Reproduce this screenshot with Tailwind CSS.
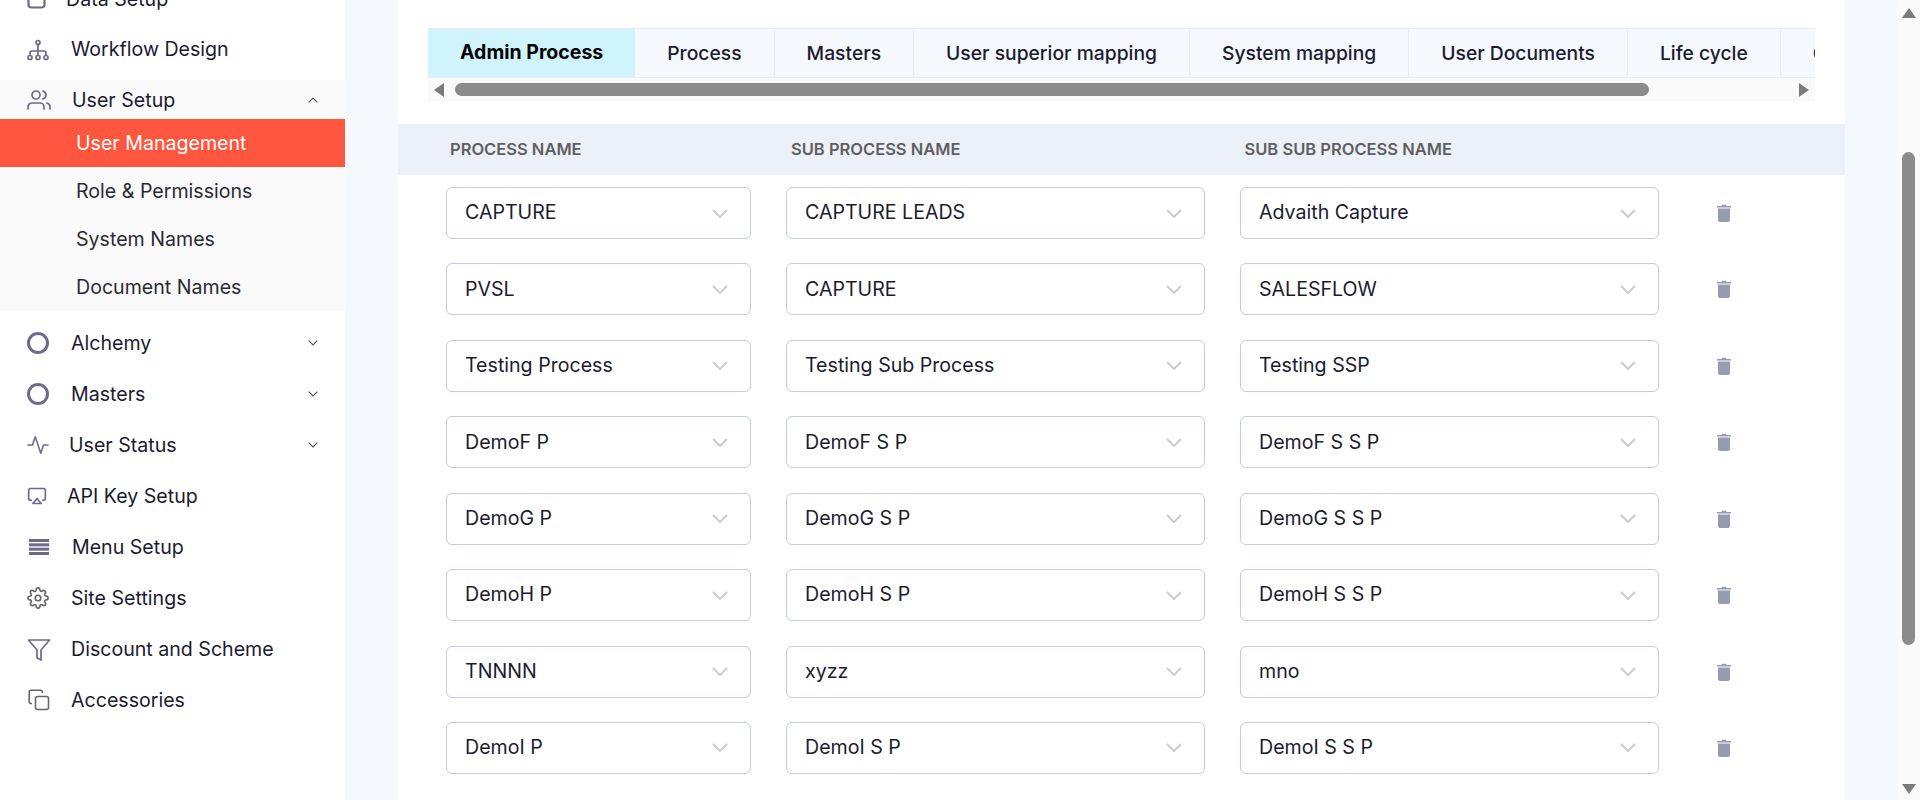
<!DOCTYPE html>
<html lang="en">
<head>
  <meta charset="UTF-8" />
  <title>User Management</title>
  <script src="https://cdn.jsdelivr.net/npm/@tailwindcss/browser@4"></script>
</head>
<body class="h-[800px] overflow-hidden flex bg-[#f5f8fd] font-['Inter',sans-serif] text-[#1b1b2f]">

  <!-- Sidebar -->
  <aside class="w-[345px] h-[800px] shrink-0 overflow-hidden bg-white text-[19.6px]">
    <div class="-mt-[27px] h-[51px] pl-[27px] flex items-center">
      <svg class="w-[20px] h-[20px] text-[#6e6a8c]" viewBox="0 0 20 20" fill="none" stroke="currentColor" stroke-width="2.2"><rect x="1.5" y="1.5" width="16" height="17" rx="3"/></svg>
      <span class="ml-[19px] mt-[2px]">Data Setup</span>
    </div>
    <div class="h-[51px] pl-[27px] flex items-center">
      <svg class="w-[22px] h-[22px] text-[#6e6a8c]" viewBox="0 0 22 22" fill="none" stroke="currentColor" stroke-width="1.7"><circle cx="11" cy="3.5" r="2"/><circle cx="3" cy="18.5" r="2"/><circle cx="11" cy="18.5" r="2"/><circle cx="19" cy="18.5" r="2"/><path d="M11 5.5v11M3 16.5v-2.5a2 2 0 0 1 2-2h12a2 2 0 0 1 2 2v2.5"/></svg>
      <span class="ml-[22px]">Workflow Design</span>
    </div>

    <div class="mt-[5px] bg-[#fafafa]">
      <div class="h-[39px] pl-[27px] pr-[27px] flex items-center">
        <svg class="w-[24px] h-[24px] text-[#6e6a8c]" viewBox="0 0 24 24" fill="none" stroke="currentColor" stroke-width="1.7" stroke-linecap="round" stroke-linejoin="round"><path d="M17 21v-2a4 4 0 0 0-4-4H5a4 4 0 0 0-4 4v2"/><circle cx="9" cy="7" r="4"/><path d="M23 21v-2a4 4 0 0 0-3-3.87"/><path d="M16 3.13a4 4 0 0 1 0 7.75"/></svg>
        <span class="ml-[21px] mt-[2px]">User Setup</span>
        <svg class="ml-auto w-[10px] h-[6px] text-[#555]" viewBox="0 0 10 6" fill="none" stroke="currentColor" stroke-width="1.2"><path d="M.7 5.3 5 1l4.3 4.3"/></svg>
      </div>
      <div class="h-[48px] pl-[76px] pt-[2px] flex items-center bg-[#ff5640] text-white">User Management</div>
      <div class="h-[48px] pl-[76px] pt-[2px] flex items-center text-[#2a2a35]">Role &amp; Permissions</div>
      <div class="h-[48px] pl-[76px] pt-[2px] flex items-center text-[#2a2a35]">System Names</div>
      <div class="h-[48px] pl-[76px] pt-[2px] flex items-center text-[#2a2a35]">Document Names</div>
    </div>

    <div class="mt-[6.5px] h-[51px] pl-[27px] pr-[27px] flex items-center">
      <svg class="w-[22px] h-[22px] text-[#6e6a8c]" viewBox="0 0 22 22" fill="none" stroke="currentColor" stroke-width="3"><circle cx="11" cy="11" r="9.5"/></svg>
      <span class="ml-[22px] mt-[2px]">Alchemy</span>
      <svg class="ml-auto w-[10px] h-[6px] text-[#555]" viewBox="0 0 10 6" fill="none" stroke="currentColor" stroke-width="1.2"><path d="M.7.7 5 5l4.3-4.3"/></svg>
    </div>
    <div class="h-[51px] pl-[27px] pr-[27px] flex items-center">
      <svg class="w-[22px] h-[22px] text-[#6e6a8c]" viewBox="0 0 22 22" fill="none" stroke="currentColor" stroke-width="3"><circle cx="11" cy="11" r="9.5"/></svg>
      <span class="ml-[22px] mt-[2px]">Masters</span>
      <svg class="ml-auto w-[10px] h-[6px] text-[#555]" viewBox="0 0 10 6" fill="none" stroke="currentColor" stroke-width="1.2"><path d="M.7.7 5 5l4.3-4.3"/></svg>
    </div>
    <div class="h-[51px] pl-[27px] pr-[27px] flex items-center">
      <svg class="w-[22px] h-[22px] text-[#6e6a8c]" viewBox="0 0 24 24" fill="none" stroke="currentColor" stroke-width="1.7" stroke-linecap="round" stroke-linejoin="round"><polyline points="23 12 18 12 15 21 9 3 6 12 1 12"/></svg>
      <span class="ml-[20px] mt-[2px]">User Status</span>
      <svg class="ml-auto w-[10px] h-[6px] text-[#555]" viewBox="0 0 10 6" fill="none" stroke="currentColor" stroke-width="1.2"><path d="M.7.7 5 5l4.3-4.3"/></svg>
    </div>
    <div class="h-[51px] pl-[27px] flex items-center">
      <svg class="w-[20px] h-[20px] text-[#6e6a8c]" viewBox="0 0 24 24" fill="none" stroke="currentColor" stroke-width="2" stroke-linecap="round" stroke-linejoin="round"><path d="M5 17H4a2 2 0 0 1-2-2V5a2 2 0 0 1 2-2h16a2 2 0 0 1 2 2v10a2 2 0 0 1-2 2h-1"/><polygon points="12 15 17 21 7 21 12 15"/></svg>
      <span class="ml-[20px] mt-[2px]">API Key Setup</span>
    </div>
    <div class="h-[51px] pl-[29px] flex items-center">
      <svg class="w-[20px] h-[16px] text-[#6e6a8c]" viewBox="0 0 20 16" fill="currentColor"><rect width="20" height="3"/><rect y="4.3" width="20" height="3"/><rect y="8.7" width="20" height="3"/><rect y="13" width="20" height="3"/></svg>
      <span class="ml-[23px] mt-[2px]">Menu Setup</span>
    </div>
    <div class="h-[51px] pl-[27px] flex items-center">
      <svg class="w-[22px] h-[22px] text-[#666]" viewBox="0 0 24 24" fill="none" stroke="currentColor" stroke-width="1.8" stroke-linecap="round" stroke-linejoin="round"><circle cx="12" cy="12" r="3"/><path d="M19.4 15a1.65 1.65 0 0 0 .33 1.82l.06.06a2 2 0 0 1 0 2.83 2 2 0 0 1-2.83 0l-.06-.06a1.65 1.65 0 0 0-1.82-.33 1.65 1.65 0 0 0-1 1.51V21a2 2 0 0 1-2 2 2 2 0 0 1-2-2v-.09A1.65 1.65 0 0 0 9 19.4a1.65 1.65 0 0 0-1.82.33l-.06.06a2 2 0 0 1-2.83 0 2 2 0 0 1 0-2.83l.06-.06a1.65 1.65 0 0 0 .33-1.82 1.65 1.65 0 0 0-1.51-1H3a2 2 0 0 1-2-2 2 2 0 0 1 2-2h.09A1.65 1.65 0 0 0 4.6 9a1.65 1.65 0 0 0-.33-1.82l-.06-.06a2 2 0 0 1 0-2.83 2 2 0 0 1 2.83 0l.06.06a1.65 1.65 0 0 0 1.82.33H9a1.65 1.65 0 0 0 1-1.51V3a2 2 0 0 1 2-2 2 2 0 0 1 2 2v.09a1.65 1.65 0 0 0 1 1.51 1.65 1.65 0 0 0 1.82-.33l.06-.06a2 2 0 0 1 2.83 0 2 2 0 0 1 0 2.83l-.06.06a1.65 1.65 0 0 0-.33 1.82V9a1.65 1.65 0 0 0 1.51 1H21a2 2 0 0 1 2 2 2 2 0 0 1-2 2h-.09a1.65 1.65 0 0 0-1.51 1z"/></svg>
      <span class="ml-[22px] mt-[2px]">Site Settings</span>
    </div>
    <div class="h-[51px] pl-[27px] flex items-center">
      <svg class="w-[24px] h-[24px] text-[#6e6a8c]" viewBox="0 0 24 24" fill="none" stroke="currentColor" stroke-width="1.7" stroke-linejoin="round"><polygon points="22.5 3 1.5 3 10 13 10 21 14 23 14 13"/></svg>
      <span class="ml-[20px] mt-[2px]">Discount and Scheme</span>
    </div>
    <div class="h-[51px] pl-[28px] flex items-center">
      <svg class="w-[22px] h-[22px] text-[#666]" viewBox="0 0 22 22" fill="none" stroke="currentColor" stroke-width="1.6"><rect x="7.5" y="7.5" width="13" height="13" rx="2"/><path d="M4 14.5H3a1.8 1.8 0 0 1-1.8-1.8V3A1.8 1.8 0 0 1 3 1.2h9.5A1.8 1.8 0 0 1 14.3 3v1"/></svg>
      <span class="ml-[21px] mt-[2px]">Accessories</span>
    </div>
  </aside>

  <!-- Main area -->
  <main class="flex-1 min-w-0 pl-[53px] pr-[52px]">
    <div class="bg-white h-[800px]">
      <div class="pt-[28px] pl-[30px] pr-[30px]">
        <!-- Tabs -->
        <div class="flex h-[50px] overflow-hidden border-y border-[#e8ecf4] bg-[#f5f8fd] text-[19.3px] whitespace-nowrap">
          <div class="px-[32px] flex items-center bg-[#cff4fc] font-bold text-black text-[19.5px]">Admin Process</div>
          <div class="px-[32px] flex items-center border-r border-[#e8ecf4] font-medium">Process</div>
          <div class="px-[32px] flex items-center border-r border-[#e8ecf4] font-medium">Masters</div>
          <div class="px-[32px] flex items-center border-r border-[#e8ecf4] font-medium">User superior mapping</div>
          <div class="px-[32px] flex items-center border-r border-[#e8ecf4] font-medium">System mapping</div>
          <div class="px-[32px] flex items-center border-r border-[#e8ecf4] font-medium">User Documents</div>
          <div class="px-[32px] flex items-center border-r border-[#e8ecf4] font-medium">Life cycle</div>
          <div class="px-[32px] flex items-center font-medium">Company</div>
        </div>
        <!-- Tabs horizontal scrollbar -->
        <div class="h-[23px] bg-[#fafafa] flex items-center pl-[6px] pr-[6px]">
          <svg class="w-[10px] h-[14px] text-[#7a7a7a]" viewBox="0 0 10 14" fill="currentColor"><path d="M10 0v14L0 7z"/></svg>
          <div class="ml-[11px] w-[1194px] h-[13px] rounded-full bg-[#8c8c8c]"></div>
          <svg class="ml-auto w-[10px] h-[14px] text-[#7a7a7a]" viewBox="0 0 10 14" fill="currentColor"><path d="M0 0v14l10-7z"/></svg>
        </div>
      </div>

      <!-- Table header -->
      <div class="mt-[23px] h-[51px] bg-[#ecf1f9] flex items-center text-[16.5px] font-semibold text-[#5f5f5f]">
        <div class="ml-[52px] w-[341px]">PROCESS NAME</div>
        <div class="w-[453.5px]">SUB PROCESS NAME</div>
        <div>SUB SUB PROCESS NAME</div>
      </div>

      <!-- Rows -->
      <div id="rows" class="pt-[12px]"></div>
    </div>
  </main>

  <!-- Page scrollbar -->
  <div class="w-[23px] h-[800px] shrink-0 bg-[#fafafa] flex flex-col items-center">
    <svg class="mt-[8px] w-[14px] h-[10px] text-[#7a7a7a]" viewBox="0 0 14 10" fill="currentColor"><path d="M7 0l7 10H0z"/></svg>
    <div class="mt-[134px] w-[13px] h-[493px] rounded-full bg-[#8c8c8c]"></div>
    <svg class="mt-auto mb-[6px] w-[14px] h-[10px] text-[#7a7a7a]" viewBox="0 0 14 10" fill="currentColor"><path d="M7 10l7-10H0z"/></svg>
  </div>

  <script>
    const rows = [
      ["CAPTURE", "CAPTURE LEADS", "Advaith Capture"],
      ["PVSL", "CAPTURE", "SALESFLOW"],
      ["Testing Process", "Testing Sub Process", "Testing SSP"],
      ["DemoF P", "DemoF S P", "DemoF S S P"],
      ["DemoG P", "DemoG S P", "DemoG S S P"],
      ["DemoH P", "DemoH S P", "DemoH S S P"],
      ["TNNNN", "xyzz", "mno"],
      ["DemoI P", "DemoI S P", "DemoI S S P"]
    ];

    const select = (text, width) => `
      <div class="h-[52px] mr-[35px] pl-[18px] pr-[22px] flex items-center justify-between bg-white border border-[#c3cbdc] rounded-[6px] text-[19.6px]" style="width:${width}px">
        <span>${text}</span>
        <svg class="w-[16px] h-[9px] text-[#cccccc]" viewBox="0 0 16 9" fill="none" stroke="currentColor" stroke-width="2"><path d="M1 1l7 7 7-7"/></svg>
      </div>`;

    document.getElementById("rows").innerHTML = rows.map(r => `
      <div class="flex items-center h-[52px] mb-[24.43px] pl-[48px]">
        ${select(r[0], 305)}${select(r[1], 419)}${select(r[2], 419)}
        <svg class="ml-[23px] w-[14px] h-[18px] text-[#959cb2]" viewBox="0 0 14 18" fill="currentColor"><path d="M0 2h4.5l.5-1.2h4l.5 1.2H14v1.5H0z"/><path d="M1 4.5h12V16a2 2 0 0 1-2 2H3a2 2 0 0 1-2-2z"/></svg>
      </div>`).join("");
  </script>
</body>
</html>
